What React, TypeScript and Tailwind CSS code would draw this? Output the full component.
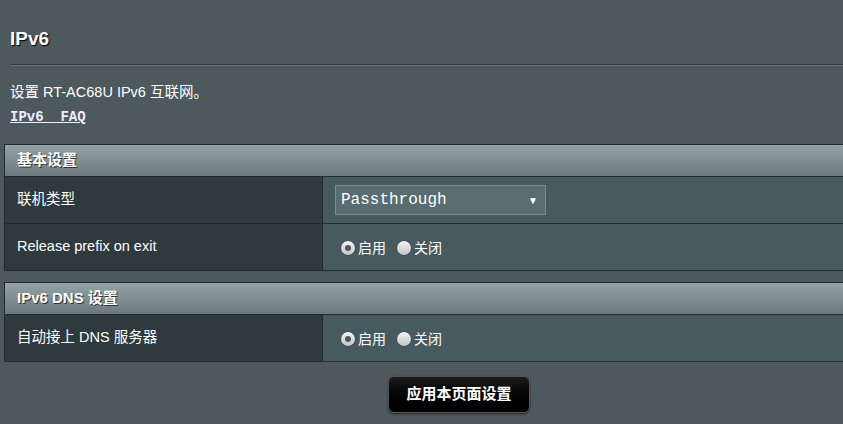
const FONT = "font-['Liberation_Sans','Noto_Sans_CJK_SC',sans-serif]";

function Radio({ checked, label }: { checked?: boolean; label: string }) {
  return (
    <label className="flex items-center gap-[3px]">
      <span className="flex h-[14px] w-[14px] items-center justify-center rounded-full bg-gradient-to-b from-[#f4f4f4] to-[#c4c4c4] shadow-[0_0_1px_#000]">
        {checked && <span className="h-[6px] w-[6px] rounded-full bg-[#555]" />}
      </span>
      <span className="text-[14px] text-white">{label}</span>
    </label>
  );
}

function SectionHeader({ title }: { title: string }) {
  return (
    <div className="flex h-[33px] items-center border-y border-[#222b2f] bg-gradient-to-b from-[#95a3a8] to-[#6c797e] pl-[12px] text-[15px] font-bold text-white [text-shadow:1px_1px_0_#333]">
      {title}
    </div>
  );
}

function Row({ label, children }: { label: string; children: React.ReactNode }) {
  return (
    <div className="flex h-[47px] border-b border-[#222b2f]">
      <div className="flex w-[318px] items-center border-r border-[#222b2f] bg-[#2f3a3e] pl-[12px] text-[14.5px] text-white">
        {label}
      </div>
      <div className="flex flex-1 items-center bg-[#475a5f] pl-[12px]">{children}</div>
    </div>
  );
}

function OnOff() {
  return (
    <div className="flex items-center gap-[11px] pl-[6px] pt-[2px]">
      <Radio checked label="启用" />
      <Radio label="关闭" />
    </div>
  );
}

export default function App() {
  return (
    <div className={`h-[424px] w-[843px] overflow-hidden bg-[#4d595d] text-white ${FONT}`}>
      <div className="pl-[10px] pt-[27px]">
        <h1 className="text-[19px] font-bold leading-[24px] [text-shadow:1px_1px_1px_#000]">IPv6</h1>
        <div className="mt-[13px] border-t border-[#30393d] border-b border-b-[#6a777b]" />
        <p className="mt-[17px] text-[14.5px] leading-[18px]">设置 RT-AC68U IPv6 互联网。</p>
        <a className="mt-[8px] block font-['Liberation_Mono',monospace] text-[14px] font-bold leading-[16px] text-[#eef] underline">
          IPv6&nbsp;&nbsp;FAQ
        </a>
      </div>

      <div className="ml-[4px] mt-[19px] border-l border-[#222b2f]">
        <SectionHeader title="基本设置" />
        <Row label="联机类型">
          <div className="flex h-[30px] w-[211px] items-center justify-between border border-[#7a8c91] bg-[#596c71] pl-[5px] pr-[7px]">
            <span className="font-['Liberation_Mono',monospace] text-[16px] text-white">Passthrough</span>
            <span className="text-[10px] text-white">▼</span>
          </div>
        </Row>
        <Row label="Release prefix on exit">
          <OnOff />
        </Row>
      </div>

      <div className="ml-[4px] mt-[11px] border-l border-[#222b2f]">
        <SectionHeader title="IPv6 DNS 设置" />
        <Row label="自动接上 DNS 服务器">
          <OnOff />
        </Row>
      </div>

      <div className="ml-[388px] mt-[14px]">
        <button className="h-[37px] w-[142px] rounded-[6px] border border-[#555] bg-gradient-to-b from-[#1b1b1b] to-[#000] text-[15px] font-bold text-white shadow-[0_1px_2px_#222]">
          应用本页面设置
        </button>
      </div>
    </div>
  );
}
